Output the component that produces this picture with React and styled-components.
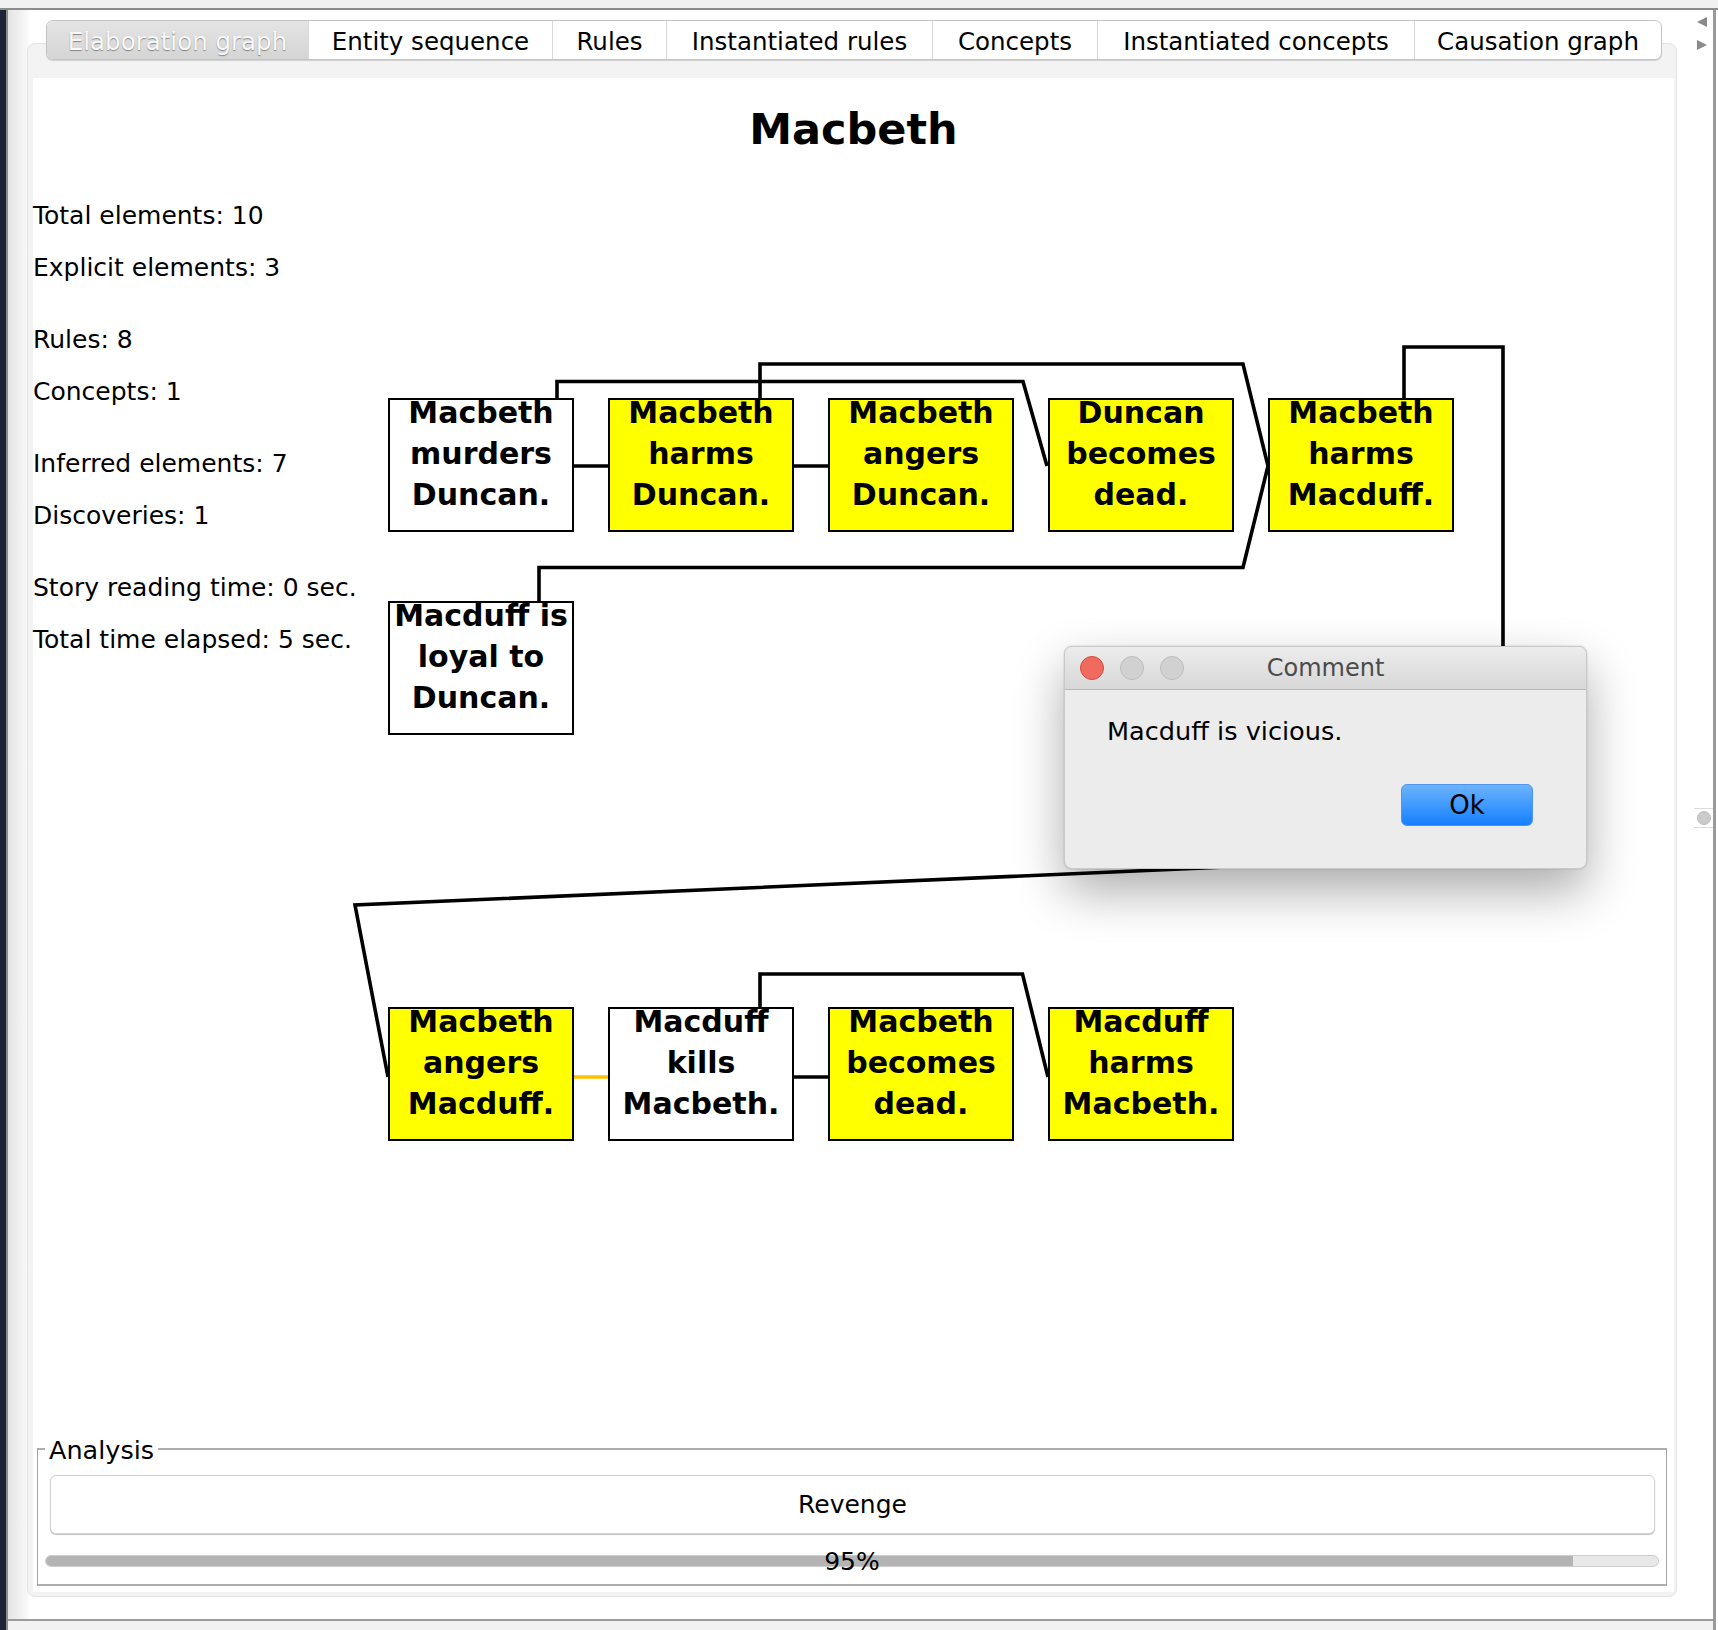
import React from 'react'
import styled, { createGlobalStyle, css } from 'styled-components'

const GlobalStyle = createGlobalStyle`
    html, body {
        margin: 0;
        padding: 0;
        background: #fff;
    }
    body {
        font-family: "DejaVu Sans", "Liberation Sans", sans-serif;
        color: #000;
    }
    * {
        box-sizing: border-box;
    }
`

const Window = styled.div`
    position: relative;
    width: 1718px;
    height: 1630px;
    overflow: hidden;
    display: flex;
    flex-direction: column;
    background: #fff;
`

const TopStrip = styled.div`
    height: 10px;
    flex: none;
    background: #f1f1f1;
    border-bottom: 2px solid #8c8c8c;
`

const Body = styled.div`
    flex: 1;
    display: flex;
`

const DarkEdge = styled.div`
    width: 6px;
    flex: none;
    background: #1e2436;
`

const Main = styled.div`
    width: 1710px;
    flex: none;
    display: flex;
    flex-direction: column;
    border-left: 2px solid #8d8d8d;
    border-right: 3px solid #9a9a9a;
    background: linear-gradient(to right, #e4e4e4 0, #f8f8f8 19px, #fff 22px);
`

const RightPad = styled.div`
    width: 2px;
    flex: none;
    background: #fff;
`

const PaneRow = styled.div`
    display: flex;
    height: 1587px;
    flex: none;
`

const Gutter = styled.div`
    width: 19px;
    flex: none;
`

const PaneColumn = styled.div`
    width: 1650px;
    flex: none;
    display: flex;
    flex-direction: column;
    padding-top: 10px;
`

const TabRow = styled.div`
    position: relative;
    z-index: 1;
    align-self: flex-start;
    display: flex;
    height: 40px;
    margin-left: 19px;
    background: #fff;
    border: 1px solid #c4c4c4;
    border-radius: 7px;
    overflow: hidden;
    box-shadow: 0 1px 1px rgba(0, 0, 0, 0.15);
`

const Tab = styled.div`
    width: ${p => p.$w}px;
    flex: none;
    display: flex;
    align-items: center;
    justify-content: center;
    padding-top: 3px;
    font-size: 24.5px;
    color: #000;
    border-left: 1px solid #d8d8d8;
    white-space: nowrap;

    &:first-child {
        border-left: none;
    }

    ${p => p.$active && css`
        background: linear-gradient(#e4e4e4, #d5d5d5);
        color: #f8f8f8;
        text-shadow: 0 1px 1px #858585;
    `}
`

const Pane = styled.div`
    margin-top: -17px;
    height: 1554px;
    background: #f3f3f3;
    border: 1px solid #e4e4e4;
    border-radius: 8px;
    padding: 34px 2px 4px 5px;
`

const Content = styled.div`
    height: 1514px;
    background: #fff;
    display: flex;
    flex-direction: column;
`

const Title = styled.h1`
    margin: 0;
    height: 102px;
    flex: none;
    display: flex;
    align-items: center;
    justify-content: center;
    font-size: 43px;
    font-weight: bold;
`

const GraphRow = styled.div`
    display: flex;
    height: 1000px;
    flex: none;
`

const Stats = styled.div`
    width: 307px;
    flex: none;
    padding-top: 10px;
`

const StatGroup = styled.div`
    margin-bottom: 20px;
`

const StatLine = styled.div`
    font-size: 25px;
    line-height: 52px;
    white-space: nowrap;
`

const Canvas = styled.div`
    position: relative;
    flex: 1;
`

const Wires = styled.svg`
    position: absolute;
    left: 0;
    top: 0;
    overflow: visible;
    pointer-events: none;
`

const Node = styled.div`
    position: absolute;
    left: ${p => p.$x}px;
    top: ${p => p.$y}px;
    width: 186px;
    height: 134px;
    display: flex;
    justify-content: center;
    background: ${p => (p.$inferred ? '#ffff00' : '#fff')};
    border: 2px solid #000;
    font-size: 30px;
    font-weight: bold;
    line-height: 41px;
    text-align: center;
    white-space: nowrap;
`

const NodeText = styled.div`
    margin-top: -8px;
`

const Analysis = styled.div`
    position: relative;
    flex: none;
    margin: auto 7px 6px 4px;
    height: 138px;
    border: 1px solid #a4a4a4;
    border-top-width: 2px;
    border-bottom-width: 2px;
    border-top-color: #adadad;
    border-bottom-color: #adadad;
    padding: 25px 7px 0 7px;
`

const Legend = styled.div`
    position: absolute;
    left: 7px;
    top: -14px;
    padding: 0 4px;
    background: #fff;
    font-size: 25.5px;
    line-height: 29px;
`

const ResultBox = styled.div`
    height: 59px;
    margin: 0 4px 0 5px;
    display: flex;
    align-items: center;
    justify-content: center;
    background: #fff;
    border: 1px solid #d2d2d2;
    border-radius: 6px;
    box-shadow: 0 1px 1px rgba(0, 0, 0, 0.25);
    font-size: 25px;
`

const Progress = styled.div`
    position: relative;
    height: 12px;
    margin-top: 21px;
    background: #e8e8e8;
    border: 1px solid #cdcdcd;
    border-radius: 6px;
`

const ProgressFill = styled.div`
    height: 100%;
    background: #b4b4b4;
    border-radius: 6px 0 0 6px;
`

const ProgressLabel = styled.div`
    position: absolute;
    left: 0;
    right: 0;
    top: -9px;
    text-align: center;
    font-size: 25px;
    line-height: 29px;
`

const SideStrip = styled.div`
    width: 36px;
    flex: none;
    display: flex;
    flex-direction: column;
    background: #fff;
`

const Arrow = styled.div`
    width: 0;
    height: 0;
    margin-left: 20px;
    margin-top: ${p => p.$gap}px;
    border-top: 5.5px solid transparent;
    border-bottom: 5.5px solid transparent;
    ${p => (p.$dir === 'left'
        ? css`border-right: 10px solid #8a8a8a;`
        : css`border-left: 10px solid #8a8a8a;`)}
`

const Knob = styled.div`
    width: 19px;
    height: 20px;
    margin-top: 758px;
    margin-left: 17px;
    display: flex;
    align-items: center;
    justify-content: center;
    border-top: 1px solid #dcdcdc;
    border-bottom: 1px solid #dcdcdc;

    &::after {
        content: '';
        width: 12px;
        height: 12px;
        border-radius: 50%;
        background: #cbcbcb;
        border: 1px solid #bdbdbd;
    }
`

const BottomGap = styled.div`
    height: 22px;
    flex: none;
`

const BottomRule = styled.div`
    height: 2px;
    flex: none;
    background: #9b9b9b;
`

const BottomStrip = styled.div`
    flex: 1;
    background: #f2f2f2;
`

const Dialog = styled.div`
    position: absolute;
    left: 1064px;
    top: 646px;
    width: 523px;
    height: 223px;
    background: #ececec;
    border: 1px solid #c9c9c9;
    border-radius: 8px;
    overflow: hidden;
    box-shadow: 0 22px 50px rgba(0, 0, 0, 0.33), 0 0 2px rgba(0, 0, 0, 0.2);
`

const TitleBar = styled.div`
    position: relative;
    height: 43px;
    display: flex;
    align-items: center;
    justify-content: center;
    background: linear-gradient(#ececec, #d7d7d7);
    border-bottom: 1px solid #b8b8b8;
    font-size: 24px;
    color: #4b4b4b;
`

const Lights = styled.div`
    position: absolute;
    left: 15px;
    top: 9px;
    display: flex;
    gap: 16px;
`

const Light = styled.span`
    width: 24px;
    height: 24px;
    border-radius: 50%;
    background: ${p => (p.$close ? '#ef6b5f' : '#d1d1d1')};
    border: 1px solid ${p => (p.$close ? '#d5493f' : '#bcbcbc')};
`

const Message = styled.div`
    margin: 27px 0 0 42px;
    font-size: 25.6px;
    line-height: 29px;
`

const OkButton = styled.button`
    display: block;
    width: 132px;
    height: 42px;
    margin: 38px 0 0 336px;
    padding: 0;
    font-family: inherit;
    font-size: 26px;
    color: #000;
    background: linear-gradient(#6cb3fb, #1580ff);
    border: 1px solid #4f95ef;
    border-radius: 6px;
`

const tabs = [
    { label: 'Elaboration graph', w: 261, active: true },
    { label: 'Entity sequence', w: 244 },
    { label: 'Rules', w: 114 },
    { label: 'Instantiated rules', w: 266 },
    { label: 'Concepts', w: 165 },
    { label: 'Instantiated concepts', w: 317 },
    { label: 'Causation graph', w: 247 },
]

const stats = [
    ['Total elements: 10', 'Explicit elements: 3'],
    ['Rules: 8', 'Concepts: 1'],
    ['Inferred elements: 7', 'Discoveries: 1'],
    ['Story reading time: 0 sec.', 'Total time elapsed: 5 sec.'],
]

const nodes = [
    { x: 48, y: 218, lines: ['Macbeth', 'murders', 'Duncan.'] },
    { x: 268, y: 218, lines: ['Macbeth', 'harms', 'Duncan.'], inferred: true },
    { x: 488, y: 218, lines: ['Macbeth', 'angers', 'Duncan.'], inferred: true },
    { x: 708, y: 218, lines: ['Duncan', 'becomes', 'dead.'], inferred: true },
    { x: 928, y: 218, lines: ['Macbeth', 'harms', 'Macduff.'], inferred: true },
    { x: 48, y: 421, lines: ['Macduff is', 'loyal to', 'Duncan.'] },
    { x: 48, y: 827, lines: ['Macbeth', 'angers', 'Macduff.'], inferred: true },
    { x: 268, y: 827, lines: ['Macduff', 'kills', 'Macbeth.'] },
    { x: 488, y: 827, lines: ['Macbeth', 'becomes', 'dead.'], inferred: true },
    { x: 708, y: 827, lines: ['Macduff', 'harms', 'Macbeth.'], inferred: true },
]

const wires = [
    { d: 'M234 286 H268' },
    { d: 'M454 286 H488' },
    { d: 'M217 218 V201.5 H683 L707 286' },
    { d: 'M420 218 V184 H903 L928 286' },
    { d: 'M199 421 V387.5 H903 L928 286' },
    { d: 'M1064 218 V167 H1163 V675 L15 725 L48 897' },
    { d: 'M234 897 H268', color: '#ffc000' },
    { d: 'M454 897 H488' },
    { d: 'M420 827 V794 H682.5 L708 897' },
]

const App = () => {
    return (
        <>
            <GlobalStyle />
            <Window>
                <TopStrip />
                <Body>
                    <DarkEdge />
                    <Main>
                        <PaneRow>
                            <Gutter />
                            <PaneColumn>
                                <TabRow>
                                    {tabs.map(t => (
                                        <Tab key={t.label} $w={t.w} $active={t.active}>{t.label}</Tab>
                                    ))}
                                </TabRow>
                                <Pane>
                                    <Content>
                                        <Title>Macbeth</Title>
                                        <GraphRow>
                                            <Stats>
                                                {stats.map((group, i) => (
                                                    <StatGroup key={i}>
                                                        {group.map(s => <StatLine key={s}>{s}</StatLine>)}
                                                    </StatGroup>
                                                ))}
                                            </Stats>
                                            <Canvas>
                                                <Wires width="1200" height="1000">
                                                    {wires.map((w, i) => (
                                                        <path
                                                            key={i}
                                                            d={w.d}
                                                            fill="none"
                                                            stroke={w.color || '#000'}
                                                            strokeWidth="3.6"
                                                        />
                                                    ))}
                                                </Wires>
                                                {nodes.map((n, i) => (
                                                    <Node key={i} $x={n.x} $y={n.y} $inferred={n.inferred}>
                                                        <NodeText>
                                                            {n.lines.map(l => <div key={l}>{l}</div>)}
                                                        </NodeText>
                                                    </Node>
                                                ))}
                                            </Canvas>
                                        </GraphRow>
                                        <Analysis>
                                            <Legend>Analysis</Legend>
                                            <ResultBox>Revenge</ResultBox>
                                            <Progress>
                                                <ProgressFill style={{ width: '94.7%' }} />
                                                <ProgressLabel>95%</ProgressLabel>
                                            </Progress>
                                        </Analysis>
                                    </Content>
                                </Pane>
                            </PaneColumn>
                            <SideStrip>
                                <Arrow $dir="left" $gap={7} />
                                <Arrow $dir="right" $gap={13} />
                                <Knob />
                            </SideStrip>
                        </PaneRow>
                        <BottomGap />
                        <BottomRule />
                        <BottomStrip />
                    </Main>
                    <RightPad />
                </Body>

                <Dialog>
                    <TitleBar>
                        <Lights>
                            <Light $close />
                            <Light />
                            <Light />
                        </Lights>
                        Comment
                    </TitleBar>
                    <Message>Macduff is vicious.</Message>
                    <OkButton>Ok</OkButton>
                </Dialog>
            </Window>
        </>
    )
}

export default App
